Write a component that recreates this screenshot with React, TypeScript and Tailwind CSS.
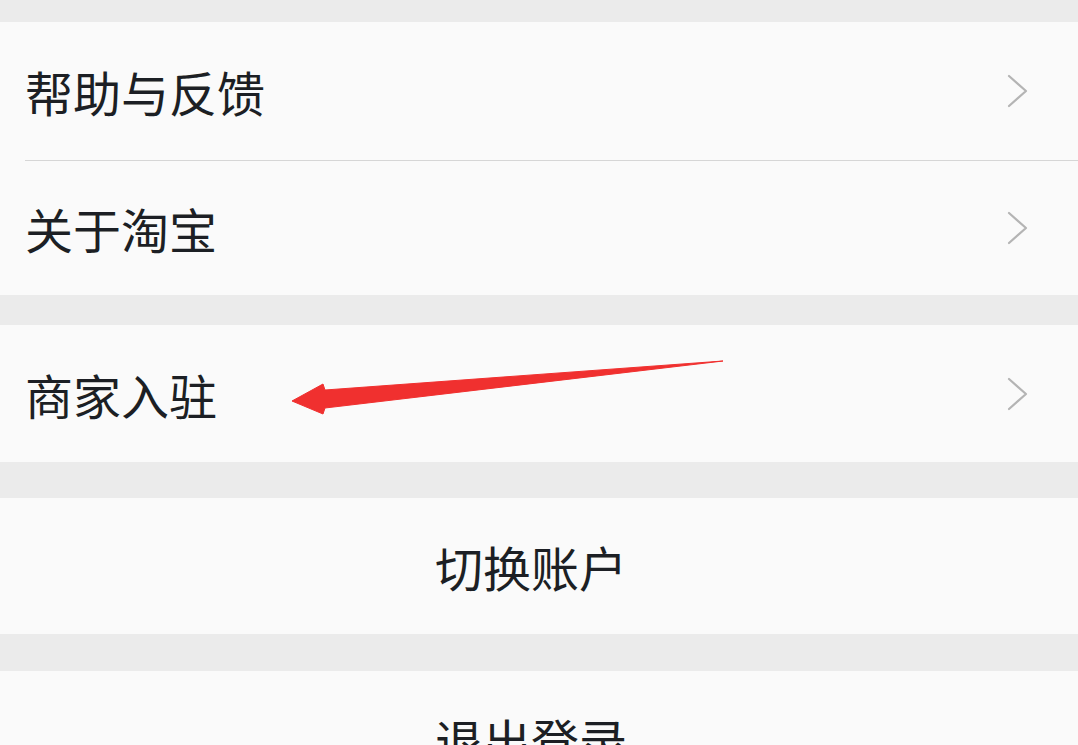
import React from "react";

const font = {
  fontFamily: '"Noto Sans CJK SC", "Noto Sans", sans-serif',
};

function Chevron() {
  return (
    <svg width="22" height="34" viewBox="0 0 22 34" className="shrink-0">
      <polyline
        points="2,2 19,17 2,32"
        fill="none"
        stroke="#b4b4b4"
        strokeWidth="2.2"
        strokeLinecap="round"
        strokeLinejoin="round"
      />
    </svg>
  );
}

function NavRow({ label, h }: { label: string; h: string }) {
  return (
    <div className={`flex items-center justify-between bg-[#fafafa] pl-[25px] pr-[49px] ${h}`}>
      <span className="text-[48px] leading-none text-[#1c1f24]">{label}</span>
      <Chevron />
    </div>
  );
}

function CenterRow({ label, h }: { label: string; h: string }) {
  return (
    <div className={`flex items-center justify-center bg-[#fafafa] pr-[16px] ${h}`}>
      <span className="text-[48px] leading-none text-[#1c1f24]">{label}</span>
    </div>
  );
}

export default function App() {
  return (
    <div className="relative h-[745px] w-[1078px] overflow-hidden bg-[#ebebeb]" style={font}>
      <div className="h-[22px]" />
      <NavRow label="帮助与反馈" h="h-[138px]" />
      <div className="bg-[#fafafa] pl-[25px]">
        <div className="h-px bg-[#d6d6d6]" />
      </div>
      <NavRow label="关于淘宝" h="h-[134px]" />
      <div className="h-[30px]" />
      <NavRow label="商家入驻" h="h-[137px]" />
      <div className="h-[36px]" />
      <CenterRow label="切换账户" h="h-[136px]" />
      <div className="h-[37px]" />
      <CenterRow label="退出登录" h="h-[136px]" />

      <svg
        className="pointer-events-none absolute left-0 top-0"
        width="1078"
        height="745"
        viewBox="0 0 1078 745"
      >
        <polygon
          points="292,401 323,384 325,390 723,361 325,408 323,414"
          fill="#f0302f"
          stroke="#f0302f"
          strokeWidth="1"
          strokeLinejoin="round"
        />
      </svg>
    </div>
  );
}
